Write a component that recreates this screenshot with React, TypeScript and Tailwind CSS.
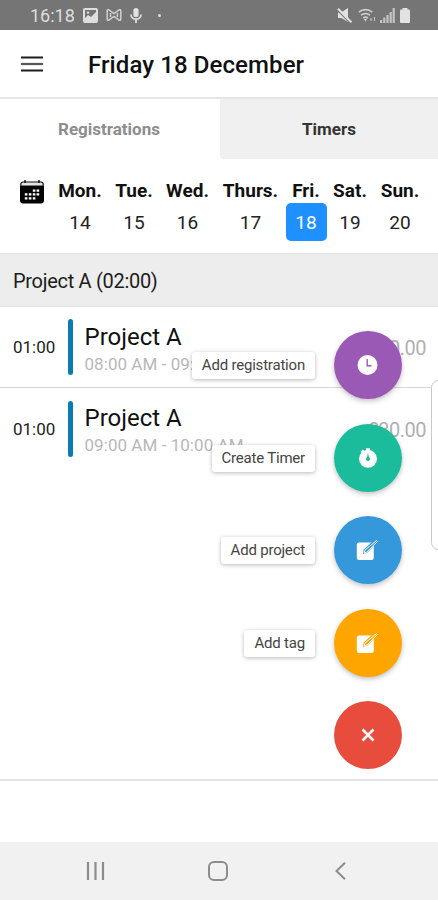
import React from 'react';

interface Day {
  name: string;
  date: number;
  width: string;
}

interface Registration {
  duration: string;
  project: string;
  time: string;
  amount: string;
}

interface Action {
  label?: string;
  color: string;
  icon: React.ReactNode;
}

const days: Day[] = [
  { name: 'Mon.', date: 14, width: 'w-[44px]' },
  { name: 'Tue.', date: 15, width: 'w-[38px]' },
  { name: 'Wed.', date: 16, width: 'w-[43px]' },
  { name: 'Thurs.', date: 17, width: 'w-[57px]' },
  { name: 'Fri.', date: 18, width: 'w-[28px]' },
  { name: 'Sat.', date: 19, width: 'w-[34px]' },
  { name: 'Sun.', date: 20, width: 'w-[40px]' },
];

const registrations: Registration[] = [
  { duration: '01:00', project: 'Project A', time: '08:00 AM - 09:00 AM', amount: '£30.00' },
  { duration: '01:00', project: 'Project A', time: '09:00 AM - 10:00 AM', amount: '£30.00' },
];

const ClockIcon = () => (
  <svg width="22" height="22" viewBox="0 0 22 22">
    <circle cx="10.5" cy="11" r="10" fill="#fff" />
    <path d="M10.2 5V11.8H14.6" fill="none" stroke="#9b59b6" strokeWidth="1.4" />
  </svg>
);

const StopwatchIcon = () => (
  <svg width="22" height="22" viewBox="0 0 22 22">
    <path d="M9 1.2h4v2.2H9zM3.6 4.6l2.2-2 2 1.6-2.6 2.6z" fill="#fff" />
    <circle cx="11" cy="11.8" r="9" fill="#fff" />
    <path d="M11 5.5l.9 4.8a1.9 1.9 0 1 1-1.8 0z" fill="#1abc9c" />
  </svg>
);

const EditIcon = ({ color }: { color: string }) => (
  <svg className="-ml-[2px]" width="24" height="24" viewBox="0 0 24 24">
    <rect x="1.8" y="4.6" width="17" height="17.4" rx="2.2" fill="#fff" />
    <path d="M7.8 16.2l1-4.6L19.6 1.4l3.4 2.2L12.6 14.6z" fill={color} />
    <path d="M9 15.2l.9-3L21.4 2.6l.9 1L12 14z" fill="none" stroke="#fff" strokeWidth="1" />
  </svg>
);

const CloseIcon = () => (
  <svg width="14" height="14" viewBox="0 0 14 14">
    <path d="M1.5 1.5l11 11M12.5 1.5l-11 11" stroke="#fff" strokeWidth="2.5" />
  </svg>
);

const CalendarIcon = () => (
  <svg width="24" height="24" viewBox="0 0 24 24">
    <path d="M.8 6V4.2Q.8 2 3 2h18q2.200 0 2.200 2.200V6z" fill="#e4e4e4" stroke="#111" strokeWidth="1.2" />
    <path d="M0 6h24v14.500a3 3 0 0 1-3 3H3a3 3 0 0 1-3-3z" fill="#050505" />
    <path d="M5 0v3M19 0v3" stroke="#111" strokeWidth="1.5" />
    <path
      d="M12.8 9.4h2.6v2.4h-2.6zM16.6 9.4h2.6v2.4h-2.6zM4.8 13.2h2.6v2.4H4.8zM8.8 13.2h2.6v2.4H8.8zM12.8 13.2h2.6v2.4h-2.6zM16.6 13.2h2.6v2.4h-2.6zM4.8 17.2h2.6v2.2H4.8zM8.8 17.2h2.6v2.2H8.8zM12.8 17.2h2.6v2.2h-2.6z"
      fill="#fff"
    />
  </svg>
);

const actions: Action[] = [
  { label: 'Add registration', color: 'bg-[#9b59b6]', icon: <ClockIcon /> },
  { label: 'Create Timer', color: 'bg-[#1abc9c]', icon: <StopwatchIcon /> },
  { label: 'Add project', color: 'bg-[#3498db]', icon: <EditIcon color="#3498db" /> },
  { label: 'Add tag', color: 'bg-[#ffa500]', icon: <EditIcon color="#ffa500" /> },
  { color: 'bg-[#e74c3c]', icon: <CloseIcon /> },
];

function StatusBar() {
  return (
    <div className="flex h-[30px] shrink-0 items-center justify-between bg-[#757575] pl-[30px] pr-[28px] text-[#dedede]">
      <div className="flex items-center">
        <span className="w-[53px] pt-px text-[18px] leading-[30px]">16:18</span>
        <svg width="15" height="15" viewBox="0 0 15 15">
          <path
            fillRule="evenodd"
            d="M2 0h11a2 2 0 0 1 2 2v11a2 2 0 0 1-2 2H2a2 2 0 0 1-2-2V2a2 2 0 0 1 2-2zM2 2v8l3-3 3 2 5-5V2z"
            fill="#dedede"
          />
          <circle cx="5" cy="4.6" r="1.2" fill="#dedede" />
        </svg>
        <svg className="ml-2" width="16" height="14" viewBox="0 0 16 14" fill="none" stroke="#d0d0d0" strokeWidth="1.5">
          <path d="M1.2 3Q1.2 1 3 2l5 3.5L13 2q1.8-1 1.8 1v8q0 2-1.8 1L8 8.5 3 12q-1.8 1-1.8-1z" />
          <path d="M4.5 5v4M11.5 5v4" />
        </svg>
        <svg className="ml-2" width="12" height="15" viewBox="0 0 12 15">
          <rect x="3.4" y="0" width="5.2" height="9" rx="2.6" fill="#e2e2e2" />
          <path d="M1 6.5a5 4.6 0 0 0 10 0M6 11v4" fill="none" stroke="#dedede" strokeWidth="1.8" />
        </svg>
        <span className="ml-[16px] size-[3px] rounded-full bg-[#dedede]" />
      </div>
      <div className="flex items-center">
        <svg width="15" height="15" viewBox="0 0 15 15">
          <path d="M1 4.5h3L11 0v14L4.5 10H1z" fill="#e2e2e2" />
          <path d="M0 2l13 13" stroke="#757575" strokeWidth="1.2" />
          <path d="M1 .8l13.5 13.5" stroke="#e2e2e2" strokeWidth="2" />
        </svg>
        <svg className="ml-[6px]" width="18" height="15" viewBox="0 0 18 15" fill="none" stroke="#cfcfcf" strokeWidth="1.6">
          <path d="M.8 4.2a10 10 0 0 1 13.4 0M3 7.2a7 7 0 0 1 9 0M5.2 10a3.8 3.8 0 0 1 4.6 0" />
          <path d="M5.8 11h3.4l-1.7 2.4z" fill="#cfcfcf" stroke="none" />
          <path d="M13 10v3M16.4 9v4" strokeWidth="1" />
        </svg>
        <svg className="ml-[4px]" width="15" height="15" viewBox="0 0 15 15" fill="#c4c4c4">
          <path d="M0 12h2.2v3H0zM3.2 9.5h2.2V15H3.2zM6.4 7h2.2v8H6.4zM9.6 4h2.2v11H9.6zM12.6 0h2.2v15h-2.2z" />
        </svg>
        <svg className="ml-[5px]" width="10" height="15" viewBox="0 0 10 15" fill="#e2e2e2">
          <rect x="2.5" width="5" height="3" />
          <rect y="1.4" width="10" height="13.6" rx="1" />
        </svg>
      </div>
    </div>
  );
}

export default function App() {
  return (
    <div className="relative flex h-[900px] w-[438px] flex-col overflow-hidden bg-white font-['Roboto',sans-serif] text-[#111]">
      <StatusBar />

      <header className="flex h-[69px] shrink-0 items-center border-b-2 border-[#e6e6e6] pl-[21px]">
        <svg width="22" height="16" viewBox="0 0 22 16">
          <path d="M0 1.5h22M0 14.5h22" stroke="#1c1c1c" strokeWidth="2" />
          <path d="M0 8h22" stroke="#555" strokeWidth="2.2" />
        </svg>
        <h1 className="ml-[45px] pt-[3px] text-[24px] font-medium leading-8 tracking-[0.1px]">Friday 18 December</h1>
      </header>

      <div className="flex h-[60px] shrink-0 text-[17px] font-bold">
        <button className="w-[220px] pr-[2px] pt-px text-[#8d8d8d]">Registrations</button>
        <button className="flex-1 rounded-bl-[4px] bg-[#f0f0f0] pt-px text-[#333]">Timers</button>
      </div>

      <div className="flex h-[94px] shrink-0 pl-5">
        <div className="mt-[21px] w-[38px]">
          <CalendarIcon />
        </div>
        <div className="mt-[20px] flex gap-[13px]">
          {days.map((day) => (
            <div key={day.date} className={`flex flex-col items-center ${day.width}`}>
              <span className="text-[19px] font-bold leading-[24px]">{day.name}</span>
              <span
                className={`flex h-[38px] w-[41px] shrink-0 items-center justify-center rounded-[5px] pt-[3px] text-[19px] ${
                  day.date === 18 ? 'bg-[#1e90ff] text-white' : 'text-[#222]'
                }`}
              >
                {day.date}
              </span>
            </div>
          ))}
        </div>
      </div>

      <div className="flex h-[54px] shrink-0 items-center border-y border-[#dde1e0] bg-[#ededed] pl-[13px] pt-px text-[20px] tracking-[-0.3px] text-[#1c1c1c]">
        Project A (02:00)
      </div>

      {registrations.map((reg, i) => (
        <div
          key={i}
          className={`flex h-[81px] shrink-0 items-center pl-[13px] pr-[12px] ${i === 0 ? 'border-b border-[#d4d8d7]' : ''}`}
        >
          <span className="w-[54.5px] pt-[2px] text-[17px] text-[#222]">{reg.duration}</span>
          <span className="h-[56px] w-[5px] rounded-full bg-[#0a7cb4]" />
          <div className="ml-[12px] flex-1 pt-[3px]">
            <div className="text-[24px] leading-[30px]">{reg.project}</div>
            <div className="text-[17px] leading-[24px] tracking-[0.05px] text-[#b8b8b8]">{reg.time}</div>
          </div>
          <span className="pt-[2px] text-[20px] tracking-[-0.5px] text-[#b0b0b0]">{reg.amount}</span>
        </div>
      ))}

      <div className="flex-1 border-b-2 border-[#e4e4e4]" />
      <div className="h-[61px] shrink-0" />

      <nav className="flex h-[58px] shrink-0 items-center bg-[#f1f1f1]">
        <svg className="ml-[86px]" width="19" height="18" viewBox="0 0 19 18" stroke="#8c8c8c" strokeWidth="2.2">
          <path d="M2 0v18M9.5 0v18M17 0v18" />
        </svg>
        <svg className="ml-[103px]" width="20" height="20" viewBox="0 0 20 20">
          <rect x="1" y="1" width="18" height="18" rx="5" fill="none" stroke="#8c8c8c" strokeWidth="2" />
        </svg>
        <svg className="ml-[107px]" width="11" height="18" viewBox="0 0 11 18">
          <path d="M10 .8L1.5 9l8.5 8.2" fill="none" stroke="#8c8c8c" strokeWidth="2" />
        </svg>
      </nav>

      {/* edge panel handle */}
      <div className="absolute -right-2 top-[380px] h-[170px] w-[15px] rounded-[8px] border border-[#c8c8c8] bg-white" />

      {/* floating action menu */}
      <div className="absolute right-[36px] top-[331px] flex flex-col items-end gap-[24.5px]">
        {actions.map((action, i) => (
          <div key={i} className="flex items-center gap-[19px]">
            {action.label && (
              <span className="mt-px flex h-[27px] items-center rounded-[3px] bg-white px-[10px] text-[15px] tracking-[-0.2px] text-[#444] shadow-[0_1px_4px_rgba(0,0,0,0.28)]">
                {action.label}
              </span>
            )}
            <button
              className={`flex size-[68px] items-center justify-center rounded-full ${action.color} ${
                action.label ? 'shadow-[0_2px_5px_rgba(0,0,0,0.25)]' : ''
              }`}
            >
              {action.icon}
            </button>
          </div>
        ))}
      </div>
    </div>
  );
}
